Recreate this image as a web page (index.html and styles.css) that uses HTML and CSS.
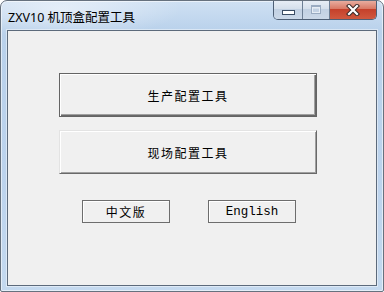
FILE: index.html
```html
<!DOCTYPE html>
<html lang="zh-CN">
<head>
    <meta charset="UTF-8">
    <title>ZXV10 机顶盒配置工具</title>
    <link rel="stylesheet" href="styles.css">
</head>
<body>
    <div class="window">
        <div class="titlebar">
            <span class="title">ZXV10 机顶盒配置工具</span>
            <div class="caption">
                <span class="cap cap-min"><i class="min-glyph"></i></span>
                <span class="cap cap-max"><i class="max-glyph"></i></span>
                <span class="cap cap-close">
                    <svg width="14" height="12" viewBox="0 0 14 12">
                        <path d="M3 2 L11 10 M11 2 L3 10" stroke="#3a2a28" stroke-width="4.2" stroke-linecap="square"/>
                        <path d="M3 2 L11 10 M11 2 L3 10" stroke="#fff" stroke-width="2.2" stroke-linecap="square"/>
                    </svg>
                </span>
            </div>
        </div>
        <div class="client">
            <button class="btn big default">生产配置工具</button>
            <button class="btn big">现场配置工具</button>
            <div class="lang-row">
                <button class="btn small">中文版</button>
                <button class="btn small latin">English</button>
            </div>
        </div>
    </div>
</body>
</html>
```
FILE: styles.css
```css
body {
    margin: 0;
    background: #fff;
}
.window {
    width: 384px;
    height: 292px;
    box-sizing: border-box;
    border: 1px solid #66717e;
    border-radius: 7px 7px 2px 2px;
    background:
        radial-gradient(ellipse 120px 30px at 60px 8px, rgba(255,255,255,0.5), rgba(255,255,255,0) 100%),
        linear-gradient(to bottom, #cfe0f3 0%, #b9d1eb 30px, #bcd3ed 60%, #c4d9ef 100%);
    box-shadow: inset 0 0 0 1px rgba(255,255,255,0.55);
    display: flex;
    flex-direction: column;
    overflow: hidden;
}
.titlebar {
    height: 29px;
    display: flex;
    align-items: center;
    padding-left: 7px;
    padding-right: 6px;
}
.title {
    font-family: "Noto Sans", "Noto Sans CJK SC", sans-serif;
    font-size: 12.5px;
    color: #000;
    flex: 1;
    margin-top: 1px;
}
.caption {
    align-self: flex-start;
    margin-top: -1px;
    display: flex;
    height: 19px;
    border: 1px solid #4e5f75;
    border-top: none;
    border-radius: 0 0 5px 5px;
    overflow: hidden;
}
.cap {
    display: flex;
    align-items: center;
    justify-content: center;
    height: 19px;
}
.cap-min,
.cap-max {
    width: 28px;
    background: linear-gradient(to bottom, #e9eff7 0%, #d6e0ec 45%, #c2d1e3 50%, #cbd8e8 100%);
    border-right: 1px solid #6d7f95;
}
.cap-max {
    width: 26px;
}
.cap-close {
    width: 46px;
    background: linear-gradient(to bottom, #eab3a6 0%, #d97a66 45%, #c5412b 50%, #d0593f 100%);
}
.min-glyph {
    width: 11px;
    height: 3px;
    margin-top: 5px;
    border: 1px solid #3b4d64;
    background: #fff;
}
.max-glyph {
    width: 8px;
    height: 6px;
    border: 1px solid #9aabc1;
    border-top-width: 2px;
    box-shadow: inset 0 0 0 1px #e6edf5;
}
.client {
    flex: 1;
    margin: 0 6px 5px 6px;
    border: 1px solid #5c6a7b;
    background: #f0f0f0;
    box-shadow: 0 0 0 1px rgba(255,255,255,0.45);
    display: flex;
    flex-direction: column;
    align-items: flex-start;
    padding-top: 42px;
    padding-left: 51px;
}
.btn {
    box-sizing: border-box;
    background: #f0f0f0;
    color: #000;
    font-family: "Noto Sans CJK SC", sans-serif;
    font-size: 12px;
    letter-spacing: 1.5px;
    padding: 0;
    margin: 0;
}
.big {
    width: 258px;
    height: 44px;
    border-style: solid;
    border-width: 1px;
    border-color: #e3e3e3 #696969 #696969 #e3e3e3;
    box-shadow: inset 1px 1px #fff, inset -1px -1px #a0a0a0;
    margin-bottom: 13px;
}
.big.default {
    border: 1px solid #646464;
    box-shadow: inset 1px 1px #fff, inset -1px -1px #696969, inset -2px -2px #a0a0a0;
}
.lang-row {
    display: flex;
    gap: 38px;
    margin-top: 13px;
    margin-left: 23px;
}
.small {
    width: 88px;
    height: 23px;
    border: 1px solid #6d6d6d;
    box-shadow: inset 1px 1px #fff;
}
.latin {
    font-family: "Liberation Mono", monospace;
    font-size: 12.5px;
    letter-spacing: 0;
}
```
